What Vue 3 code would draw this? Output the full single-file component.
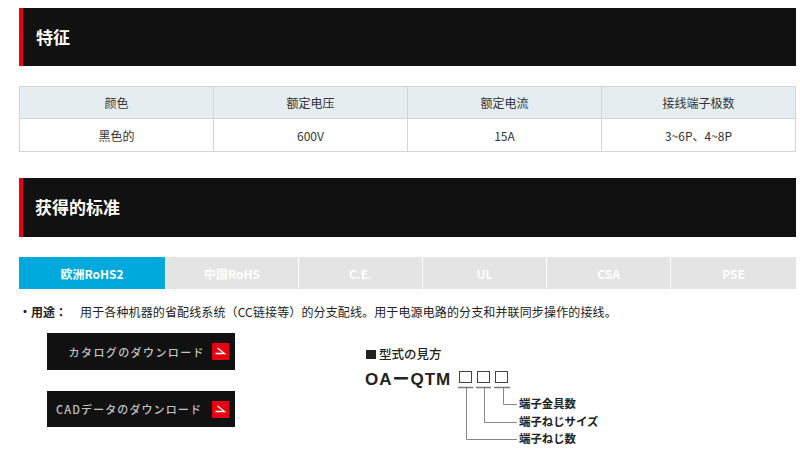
<script setup>
const heads = ['颜色', '额定电压', '额定电流', '接线端子极数']
const cells = ['黑色的', '600V', '15A', '3~6P、4~8P']
const tabs = ['欧洲RoHS2', '中国RoHS', 'C.E.', 'UL', 'CSA', 'PSE']
const downloads = [
  { text: 'カタログのダウンロード', cls: 'first' },
  { text: 'CADデータのダウンロード', cls: 'second' }
]
</script>

<template>
  <div class="page">
    <h2 class="bar">特征</h2>
    <div class="table">
      <div v-for="h in heads" :key="h" class="cell head">{{ h }}</div>
      <div v-for="c in cells" :key="c" class="cell">{{ c }}</div>
    </div>
    <h2 class="bar second-bar">获得的标准</h2>
    <div class="tabs">
      <div v-for="(t, i) in tabs" :key="t" class="tab" :class="{ active: i === 0 }">{{ t }}</div>
    </div>
    <p class="use">
      <span class="use-label">・用途：</span>
      <span class="use-text">用于各种机器的省配线系统（CC链接等）的分支配线。用于电源电路的分支和并联同步操作的接线。</span>
    </p>
    <div class="lower">
      <div class="downloads">
        <a v-for="d in downloads" :key="d.text" class="dl" :class="d.cls">
          <span class="dl-text">{{ d.text }}</span>
          <svg class="dl-icon" width="17" height="17" viewBox="0 0 17 17">
            <rect width="17" height="17" fill="#e60012" />
            <path d="M5.5 5 L12.5 10.5 H3.5" fill="none" stroke="#fff" stroke-width="1.3" />
          </svg>
        </a>
      </div>
      <div class="model">
        <div class="model-title"><span class="square"></span>型式の見方</div>
        <div class="model-code">
          <span class="code">OAーQTM</span>
          <span class="box"></span><span class="box"></span><span class="box"></span>
        </div>
        <div class="legend">
          <svg class="lines" width="61" height="56" viewBox="0 0 61 56">
            <path d="M0 1.5 H15 M18 1.5 H33 M36 1.5 H52" stroke="#777" stroke-width="1.5" fill="none" />
            <path d="M8.5 2 V53.5 H59 M26.5 2 V36.5 H59 M45.5 2 V18.5 H59" stroke="#888" stroke-width="1" fill="none" />
          </svg>
          <div class="labels">
            <div>端子金具数</div>
            <div>端子ねじサイズ</div>
            <div>端子ねじ数</div>
          </div>
        </div>
      </div>
    </div>
  </div>
</template>

<style scoped>
.page {
  width: 777px;
  height: 467px;
  padding: 8px 4px 0 19px;
  font-family: "Noto Sans CJK SC", "Noto Sans", sans-serif;
  color: #333;
  font-size: 12px;
  overflow: hidden;
}
.bar {
  margin: 0;
  height: 58px;
  line-height: 58px;
  background: #111;
  border-left: 4px solid #e60012;
  padding-left: 13px;
  color: #fff;
  font-size: 17px;
  font-weight: 700;
}
.second-bar {
  margin-top: 26px;
  height: 59px;
  line-height: 58px;
  padding-left: 12px;
}
.table {
  margin-top: 20px;
  display: grid;
  grid-template-columns: 194px 194px 194px 194px;
  grid-template-rows: 32px 33px;
  border-top: 1px solid #d5d5d5;
  border-left: 1px solid #d5d5d5;
  height: 66px;
  box-sizing: border-box;
}
.cell {
  display: flex;
  align-items: center;
  justify-content: center;
  border-right: 1px solid #d5d5d5;
  border-bottom: 1px solid #d5d5d5;
  font-size: 12px;
}
.head { background: #e5edf0; }
.tabs {
  margin-top: 20px;
  display: grid;
  grid-template-columns: 147px 133px 124px 124px 124px 125px;
  height: 32px;
}
.tab {
  display: flex;
  align-items: center;
  justify-content: center;
  background: #e4e4e4;
  color: #fff;
  font-weight: 700;
  font-size: 12px;
  margin-right: 1px;
}
.tab:last-child { margin-right: 0; }
.tab.active { background: #00a9dc; }
.use {
  margin: 14px 0 0;
  display: flex;
  font-size: 12px;
  line-height: 18px;
  color: #222;
}
.use-label {
  width: 61px;
  font-family: "Noto Sans CJK JP", sans-serif;
  font-weight: 700;
  flex: none;
}
.use-text { letter-spacing: 0.13px; }
.lower {
  display: flex;
  margin-top: 12px;
}
.downloads {
  margin-left: 28px;
  width: 188px;
  flex: none;
  display: flex;
  flex-direction: column;
  gap: 21px;
}
.dl {
  height: 37px;
  background: #111;
  color: #c4c4c4;
  display: flex;
  align-items: center;
  justify-content: flex-end;
  font-family: "Noto Sans CJK JP", "Noto Sans", sans-serif;
  font-size: 11px;
  font-weight: 500;
  letter-spacing: 1.4px;
  padding-right: 6px;
}
.dl.second { height: 36px; letter-spacing: 1.1px; }
.first .dl-text { margin-right: 7px; }
.second .dl-text { margin-right: 10px; }
.dl-icon { flex: none; }
.model {
  margin-left: 130px;
  margin-top: 13px;
  font-family: "Noto Sans CJK JP", "Noto Sans", sans-serif;
  color: #222;
}
.model-title {
  font-size: 12.5px;
  font-weight: 500;
  line-height: 16px;
  display: flex;
  align-items: center;
  gap: 3px;
  margin-left: 1px;
}
.square {
  width: 10px;
  height: 9px;
  background: #222;
  display: inline-block;
}
.model-code {
  margin-top: 5px;
  display: flex;
  align-items: center;
  height: 20px;
}
.code {
  font-family: "Liberation Sans", "Noto Sans CJK JP", sans-serif;
  font-weight: 700;
  font-size: 17px;
  letter-spacing: 1px;
  width: 94px;
  white-space: nowrap;
}
.box {
  width: 13px;
  height: 12px;
  box-sizing: border-box;
  border: 1px solid #444;
  margin-right: 5px;
}
.legend {
  display: flex;
  margin-left: 93px;
  margin-top: -1px;
}
.lines { flex: none; }
.labels {
  margin-top: 9px;
  font-size: 11.4px;
  font-weight: 700;
  line-height: 17.7px;
  white-space: nowrap;
}
</style>
